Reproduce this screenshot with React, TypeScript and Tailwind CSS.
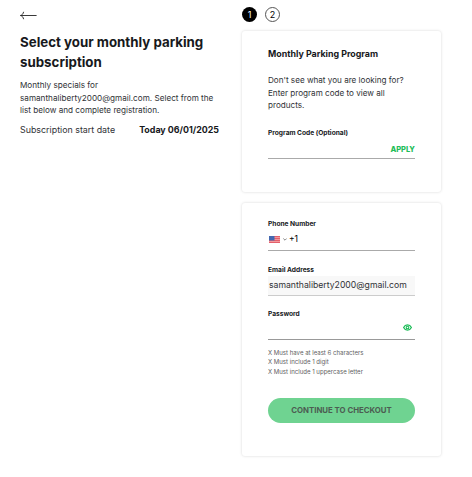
import type { ReactNode } from "react";

// ---------------------------------------------------------------------------
// Mock data
// ---------------------------------------------------------------------------

const mockUser = {
  email: "samanthaliberty2000@gmail.com",
  startDate: "Today 06/01/2025",
};

const PASSWORD_RULES = [
  "Must have at least 6 characters",
  "Must include 1 digit",
  "Must include 1 uppercase letter",
];

// ---------------------------------------------------------------------------
// Icons
// ---------------------------------------------------------------------------

function BackArrow() {
  return (
    <svg width="17" height="9" viewBox="0 0 17 9" fill="none" stroke="#222" strokeWidth="0.9">
      <path d="M16.6 4.5H0.7M3.6 0.8C3.3 2.8 2.1 4.1 0.4 4.5C2.1 4.9 3.3 6.2 3.6 8.2" />
    </svg>
  );
}

function UsFlag() {
  return (
    <svg width="11" height="7" viewBox="0 0 11 7" aria-hidden="true">
      <rect width="11" height="7" fill="#f2989c" />
      <path d="M0 0.5H11M0 2.5H11M0 4.5H11M0 6.5H11" stroke="#e4606b" strokeWidth="1" />
      <rect width="5.5" height="4.5" fill="#4468b0" />
    </svg>
  );
}

function EyeIcon() {
  return (
    <svg width="9" height="7" viewBox="0 0 9 7" fill="none" stroke="#1fbd5a" aria-hidden="true">
      <path d="M0.6 3.5C1.5 1.7 2.8 0.9 4.5 0.9S7.5 1.7 8.4 3.5C7.5 5.3 6.2 6.1 4.5 6.1S1.5 5.3 0.6 3.5Z" strokeWidth="1.3" />
      <circle cx="4.5" cy="3.5" r="1.3" strokeWidth="1.1" />
    </svg>
  );
}

// ---------------------------------------------------------------------------
// Building blocks
// ---------------------------------------------------------------------------

function Card({ className, children }: { className: string; children: ReactNode }) {
  return (
    <section className={`w-[199px] rounded-[3px] bg-white px-[26px] shadow-[0_0_3px_rgba(0,0,0,0.16)] ${className}`}>
      {children}
    </section>
  );
}

function Label({ children }: { children: ReactNode }) {
  return <div className="h-[9px] pt-px whitespace-nowrap text-[6.62px] leading-[9px] font-bold text-[#17191c]">{children}</div>;
}

export default function App() {
  return (
    <div className="flex h-[477px] w-[472px] overflow-hidden bg-white pl-5 font-['Inter',sans-serif] text-[#303236]">
      {/* Summary */}
      <div className="w-[222px] shrink-0 pt-[11px]">
        <button className="block h-[9px]" aria-label="Back">
          <BackArrow />
        </button>
        <h1 className="mt-[12px] text-[13.3px] leading-5 font-bold whitespace-nowrap text-[#17191c]">
          Select your monthly parking
          <br />
          subscription
        </h1>
        <p className="mt-[7px] text-[8.17px] leading-[12.7px] whitespace-nowrap">
          Monthly specials for
          <br />
          {mockUser.email}. Select from the
          <br />
          list below and complete registration.
        </p>
        <div className="mt-[6.5px] flex w-[199px] justify-between text-[8.87px] leading-3 whitespace-nowrap">
          <span>Subscription start date</span>
          <span className="font-bold text-[#17191c]">{mockUser.startDate}</span>
        </div>
      </div>

      <div className="pt-[7px]">
        {/* Steps */}
        <div className="mb-[9px] flex gap-2 text-[9px]">
          <span className="flex size-[15px] items-center justify-center rounded-full bg-black text-white">1</span>
          <span className="flex size-[15px] items-center justify-center rounded-full border border-[#555] text-black">2</span>
        </div>

        {/* Program code */}
        <Card className="h-[161px] pt-[17px]">
          <h2 className="text-[8.87px] leading-3 font-bold whitespace-nowrap text-[#17191c]">Monthly Parking Program</h2>
          <p className="mt-[14px] text-[8.12px] leading-[12.7px] whitespace-nowrap">
            Don't see what you are looking for?
            <br />
            Enter program code to view all
            <br />
            products.
          </p>
          <div className="mt-[15.9px]">
            <Label>Program Code (Optional)</Label>
          </div>
          <div className="flex h-[21.5px] items-center justify-end border-b border-[#aaa] pt-[6px]">
            <button className="text-[7.5px] leading-3 font-extrabold text-[#1fbd5a]">APPLY</button>
          </div>
        </Card>

        {/* Account */}
        <Card className="mt-[11px] h-[253px] pt-4">
          <Label>Phone Number</Label>
          <div className="flex h-[23px] items-start border-b border-[#aaa] pt-[5px] pl-px">
            <div className="flex h-[12px] items-center">
              <UsFlag />
              <svg className="ml-[3px]" width="4" height="3" viewBox="0 0 4 3" fill="none" stroke="#666" strokeWidth="0.8">
                <path d="M0.3 0.5L2 2.2L3.7 0.5" />
              </svg>
              <span className="ml-[2px] text-[8.5px] text-black">+1</span>
            </div>
          </div>

          <div className="mt-[14px]">
            <Label>Email Address</Label>
          </div>
          <div className="mt-[2px] flex h-5 items-center border-b border-[#ccc] bg-[#f8f8f8] pl-px text-[8.67px] whitespace-nowrap">
            {mockUser.email}
          </div>

          <div className="mt-[13px]">
            <Label>Password</Label>
          </div>
          <div className="flex h-[22px] items-start justify-end border-b border-[#999] pt-[6px] pr-[3px]">
            <button className="block h-[7px]" aria-label="Show password">
              <EyeIcon />
            </button>
          </div>
          <ul className="mt-[8px] text-[6.05px] leading-[9.3px] whitespace-nowrap text-[#626262]">
            {PASSWORD_RULES.map((rule) => (
              <li key={rule}>X {rule}</li>
            ))}
          </ul>

          <button className="mt-[22px] flex h-[25px] w-full items-center justify-center rounded-full bg-[#6fd391] text-[7.8px] font-bold whitespace-nowrap text-[#4c5d52]">
            CONTINUE TO CHECKOUT
          </button>
        </Card>
      </div>
    </div>
  );
}
